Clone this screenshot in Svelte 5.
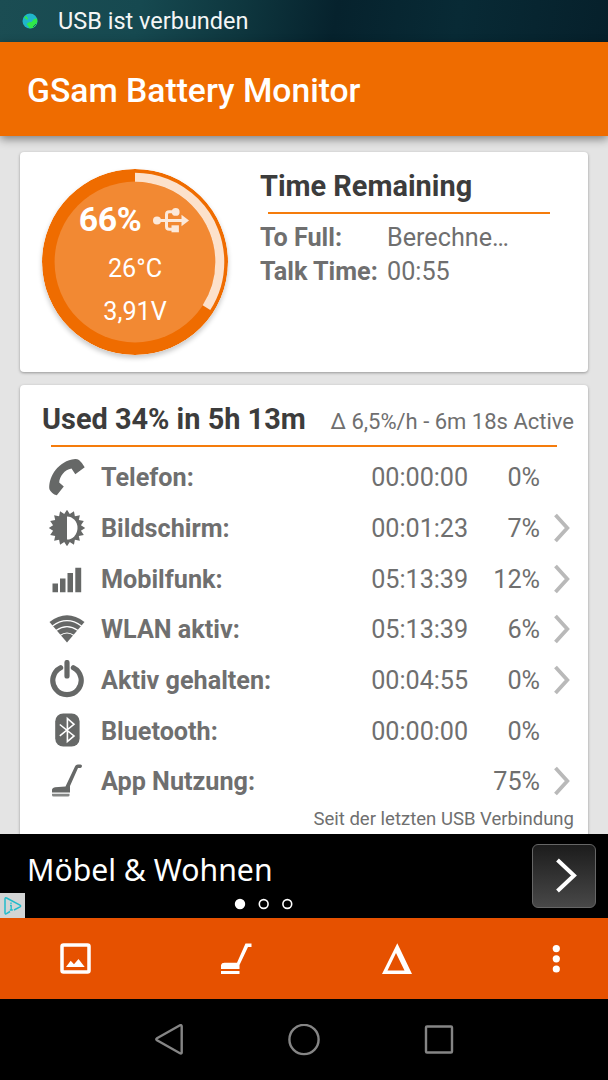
<script lang="ts">
  interface UsageRow {
    icon: string;
    label: string;
    time: string;
    percent: string;
    more: boolean; // shows the chevron
  }

  const level = 66;
  const radius = 84.8;
  const circumference = 2 * Math.PI * radius;
  const usedArc = circumference * (1 - level / 100);

  const rows: UsageRow[] = [
    { icon: 'phone', label: 'Telefon:', time: '00:00:00', percent: '0%', more: false },
    { icon: 'screen', label: 'Bildschirm:', time: '00:01:23', percent: '7%', more: true },
    { icon: 'signal', label: 'Mobilfunk:', time: '05:13:39', percent: '12%', more: true },
    { icon: 'wifi', label: 'WLAN aktiv:', time: '05:13:39', percent: '6%', more: true },
    { icon: 'power', label: 'Aktiv gehalten:', time: '00:04:55', percent: '0%', more: true },
    { icon: 'bluetooth', label: 'Bluetooth:', time: '00:00:00', percent: '0%', more: false },
    { icon: 'vacuum', label: 'App Nutzung:', time: '', percent: '75%', more: true },
  ];

  // 16-pointed star around the brightness icon
  const star = Array.from({ length: 32 }, (_, i) => {
    const r = i % 2 ? 14.2 : 18.2;
    const a = (i * Math.PI) / 16;
    return `${(20 + r * Math.sin(a)).toFixed(2)},${(20 - r * Math.cos(a)).toFixed(2)}`;
  }).join(' ');
</script>

<div class="screen">
  <div class="status-bar">
    <svg class="globe" width="16" height="16" viewBox="0 0 16 16">
      <circle cx="8" cy="8" r="7.5" fill="#20b5cb" />
      <path d="M2 4.5L4 2.8L6.3 6L5 6.8ZM4.5 11L7 9.3L9.5 9L12 6L15.2 5.5Q16 9 13.8 12.5Q11 15.8 7.5 15.3L6.2 13Z" fill="#2fe84a" />
      <path d="M11 14L14 11" stroke="#176f5c" stroke-width="1" />
    </svg>
    <span>USB ist verbunden</span>
  </div>

  <header class="app-bar">
    <h1>GSam Battery Monitor</h1>
  </header>

  <main class="content">
    <section class="card battery">
      <div class="gauge">
        <svg class="gauge-ring" width="186" height="186" viewBox="0 0 186 186">
          <circle cx="93" cy="93" r="93" fill="#ef6c00" />
          <circle cx="93" cy="93" r="80.4" fill="#f28933" />
          <circle
            cx="93"
            cy="93"
            r={radius}
            fill="none"
            stroke="#fce1cb"
            stroke-width="9"
            stroke-dasharray="{usedArc} {circumference}"
            transform="rotate(-90 93 93)"
          />
        </svg>
        <div class="gauge-text">
          <div class="gauge-level">
            <span>{level}%</span>
            <svg width="36" height="25" viewBox="0 0 36 25" fill="#fce9db">
              <circle cx="4" cy="12.5" r="4" />
              <path d="M28.5 6.7L36 12.5L28.5 18.3Z" />
              <circle cx="22.7" cy="3.9" r="3.9" />
              <path d="M18.5 17.3H25.9V24.3H18.5Z" />
              <path d="M4 12.5H30M13.5 12.5V6.5Q13.5 3.7 16.3 3.7H22M13.5 12.5V18.5Q13.5 21.3 16.3 21.3H20" fill="none" stroke="#fce9db" stroke-width="3" />
            </svg>
          </div>
          <div class="gauge-value">26°C</div>
          <div class="gauge-value">3,91V</div>
        </div>
      </div>
      <div class="remaining">
        <h2>Time Remaining</h2>
        <hr />
        <dl>
          <dt>To Full:</dt>
          <dd>Berechne…</dd>
          <dt>Talk Time:</dt>
          <dd>00:55</dd>
        </dl>
      </div>
    </section>

    <section class="card usage">
      <div class="usage-head">
        <h2>Used 34% in 5h 13m</h2>
        <span>Δ 6,5%/h - 6m 18s Active</span>
      </div>
      <hr />
      <ul>
        {#each rows as row (row.label)}
          <li>
            <svg class="row-icon" width="40" height="40" viewBox="0 0 40 40" fill="#666867">
              {#if row.icon === 'phone'}
                <path d="M2.4 32.2C1.2 22 9 6 25 2.5Q29.5 1.4 32 3Q35.5 6 37.7 10.3L28.3 17.2L24.5 11.4C17.5 12.5 12.5 19.5 12.2 25.4L16.8 29.6L9.8 38.3Q4.500 36.8 2.4 32.2Z" />
              {:else if row.icon === 'screen'}
                <polygon points={star} />
                <path d="M20 8.5A10.500 11.500 0 0 1 20 31.500Z" fill="#fff" />
              {:else if row.icon === 'signal'}
                <path d="M5.500 24.500h5.500v8.700h-5.500zM13 19.500h5.500v13.700h-5.500zM20.500 14h5.500v19.200h-5.500zM28.300 8.700h5.900v24.500h-5.900z" />
              {:else if row.icon === 'wifi'}
                <path d="M2.500 13Q20 -.4 37.500 13L20 33.500Z" />
                <path d="M5.500 17Q20 6.300 34.500 17M9 21.500Q20 13.800 31 21.500M13 26.500Q20 21.500 27 26.500" fill="none" stroke="#fff" stroke-width="1.2" />
              {:else if row.icon === 'power'}
                <path d="M13.6 7.700A14.200 14.200 0 1 0 26.400 7.700M20 2.500V16" fill="none" stroke="#666867" stroke-width="5.2" stroke-linecap="round" />
              {:else if row.icon === 'bluetooth'}
                <rect x="8.2" y="2.500" width="24.400" height="33" rx="8" />
                <path d="M12.800 13.500L27 24.900L20.400 30.500V7.500L27 13.300L12.800 24.900" fill="none" stroke="#fff" stroke-width="1.6" />
              {:else}
                <path d="M5 28.500Q5.500 26.500 8 26.200L18.500 25.500L27.500 6.500Q28.500 3.500 31 3.500H33.500Q35 3.500 35 5T33.500 7H31L23 25V31.500H5Z" />
                <path d="M5 32.800H22.500V34.500Q22.500 35.600 21 35.600H6.500Q5 35.600 5 34Z" fill="#858786" />
              {/if}
            </svg>
            <span class="row-label">{row.label}</span>
            <span class="row-time">{row.time}</span>
            <span class="row-percent">{row.percent}</span>
            <span class="row-more">
              {#if row.more}
                <svg width="18" height="30" viewBox="0 0 18 30">
                  <path d="M2.5 2L14.3 15L2.5 28" fill="none" stroke="#b9b9b9" stroke-width="3.8" />
                </svg>
              {/if}
            </span>
          </li>
        {/each}
      </ul>
      <p class="since">Seit der letzten USB Verbindung</p>
    </section>
  </main>

  <aside class="ad">
    <span class="ad-title">Möbel &amp; Wohnen</span>
    <div class="ad-button">
      <svg width="24" height="36" viewBox="0 0 24 36">
        <path d="M2.5 2L19 17.500L2.5 33" fill="none" stroke="#fff" stroke-width="4" />
      </svg>
    </div>
    <svg class="ad-dots" width="60" height="12" viewBox="0 0 60 12" fill="none" stroke="#fff" stroke-width="1.6">
      <circle cx="6" cy="6" r="4.400" fill="#fff" />
      <circle cx="29.700" cy="6" r="4.400" />
      <circle cx="53.300" cy="6" r="4.400" />
    </svg>
    <svg class="ad-choices" width="25" height="25" viewBox="0 0 25 25">
      <rect width="25" height="25" fill="#d3d5d5" />
      <path d="M10 18.500L6.500 20.700Q5 21.500 5 19.800V6Q5 4.200 6.600 5L20 12.200Q21.300 13 20 13.800L14 17" fill="none" stroke="#22bccb" stroke-width="1.5" />
      <path d="M11 9.500V11M10 12.500H11.200V17M9.800 17H12.800" fill="none" stroke="#22bccb" stroke-width="1.3" />
    </svg>
  </aside>

  <div class="toolbar">
    <svg width="32" height="32" viewBox="0 0 32 32">
      <rect x="2" y="2" width="27" height="27" rx="1.5" fill="none" stroke="#fff" stroke-width="3.5" />
      <path d="M6 24L10.700 17.800L14 21.300L18.500 16L24.700 24Z" fill="#fff" />
    </svg>
    <svg width="32" height="32" viewBox="0 0 32 32" fill="#fff">
      <path d="M1 22Q1.500 19.700 4.500 19.700H17L25.500 .5H31.500V4H28L19.500 22V26H1ZM1 28H19.500V31H1Z" />
    </svg>
    <svg width="32" height="32" viewBox="0 0 32 32">
      <path d="M17.300 .3L32 31H2ZM16 10L7.500 27.500H24.500Z" fill="#fff" fill-rule="evenodd" />
    </svg>
    <svg width="32" height="32" viewBox="0 0 32 32" fill="#fff">
      <circle cx="16.300" cy="5.600" r="3.600" />
      <circle cx="16.300" cy="15.800" r="3.600" />
      <circle cx="16.300" cy="26" r="3.600" />
    </svg>
  </div>

  <nav class="nav-bar">
    <svg width="32" height="32" viewBox="0 0 32 32">
      <path d="M28.700 2.500V28.500Q28.500 30 27 29.200L4 16.300Q2.500 15.200 4 14.200L27 1.300Q28.500 .6 28.700 2.500Z" />
    </svg>
    <svg width="32" height="32" viewBox="0 0 32 32">
      <circle cx="16" cy="15.500" r="14.600" />
    </svg>
    <svg width="32" height="32" viewBox="0 0 32 32">
      <rect x="3" y="2.500" width="26" height="26" rx="1" />
    </svg>
  </nav>
</div>

<style>
  :global(body) {
    margin: 0;
  }

  .screen {
    display: flex;
    flex-direction: column;
    width: 608px;
    height: 1080px;
    overflow: hidden;
    background: #e4e4e4;
    color: #6f6f6f;
    font-family: Roboto, 'Liberation Sans', sans-serif;
    font-size: 25.2px;
    line-height: 30px;
  }
  .screen svg {
    display: block;
    flex: none;
  }
  h1,
  h2,
  p,
  ul,
  dl,
  dd {
    margin: 0;
    padding: 0;
  }
  hr {
    height: 2px;
    margin: 0;
    border: 0;
    background: #f57c0c;
  }

  .status-bar {
    display: flex;
    align-items: center;
    gap: 20px;
    flex: none;
    height: 42px;
    padding-left: 22px;
    box-sizing: border-box;
    background: linear-gradient(100deg, #1b4d53 0%, #164950 23%, #0e363e 40%, #06222d 55%, #082a35 75%, #06202b 100%);
    color: #f4f6f6;
    font-size: 23.5px;
  }

  .app-bar {
    position: relative;
    flex: none;
    display: flex;
    align-items: center;
    height: 94px;
    padding: 0 27px;
    background: #ef6c00;
    box-shadow: 0 3px 9px rgba(0, 0, 0, 0.45);
    z-index: 1;
  }
  .app-bar h1 {
    padding-top: 4px;
    color: #fff;
    font-size: 33.65px;
    font-weight: 500;
    line-height: 40px;
  }

  .content {
    display: flex;
    flex-direction: column;
    gap: 13px;
    flex: none;
    height: 698px;
    padding: 16px 20px 0;
    box-sizing: border-box;
    overflow: hidden;
  }
  .card {
    flex: none;
    box-sizing: border-box;
    background: #fff;
    border-radius: 4px;
    box-shadow: 0 1px 3px rgba(0, 0, 0, 0.35);
  }
  .card h2 {
    color: #3c3c3c;
    font-size: 28.9px;
    font-weight: 700;
    line-height: 34px;
    white-space: nowrap;
  }

  .battery {
    display: flex;
    gap: 32px;
    height: 220px;
    padding: 17px 22px 0;
  }
  .gauge {
    display: grid;
    width: 186px;
    height: 186px;
  }
  .gauge-ring,
  .gauge-text {
    grid-area: 1 / 1;
  }
  .gauge-ring {
    border-radius: 50%;
    box-shadow: 0 3px 5px rgba(0, 0, 0, 0.22);
  }
  .gauge-text {
    z-index: 1;
    padding-top: 30px;
    color: #fff;
    text-align: center;
  }
  .gauge-level {
    display: flex;
    align-items: center;
    justify-content: center;
    gap: 12px;
    height: 42px;
    padding-right: 2px;
    font-size: 33.8px;
    font-weight: 700;
    letter-spacing: -0.5px;
  }
  .gauge-value {
    padding-top: 13px;
  }

  .remaining {
    width: 298px;
  }
  .remaining hr {
    margin: 9px 8px;
  }
  .remaining dl {
    display: grid;
    grid-template-columns: 127px 1fr;
    row-gap: 4px;
  }
  .remaining dt {
    font-weight: 700;
    white-space: nowrap;
  }

  .usage {
    height: 480px;
    padding: 17px 14px 0 22px;
  }
  .usage-head {
    display: flex;
    align-items: baseline;
    justify-content: space-between;
  }
  .usage-head span {
    font-size: 22px;
    white-space: nowrap;
  }
  .usage > hr {
    margin: 8px 17px 6px 9px;
  }
  .usage ul {
    list-style: none;
  }
  .usage li {
    display: flex;
    align-items: center;
    height: 50.67px;
  }
  .row-icon {
    margin: 0 14px 2px 5px;
  }
  .row-label {
    flex: 1;
    font-weight: 700;
  }
  .row-time {
    letter-spacing: -0.05px;
  }
  .row-percent {
    width: 72px;
    text-align: right;
  }
  .row-more {
    width: 34px;
    padding: 0 0 2px 13px;
    box-sizing: border-box;
  }
  .since {
    font-size: 18.55px;
    line-height: 23px;
    text-align: right;
  }

  .ad {
    position: relative;
    display: flex;
    align-items: center;
    justify-content: space-between;
    flex: none;
    height: 84px;
    padding: 0 12px 0 27px;
    background: #000;
  }
  .ad-title {
    padding-bottom: 13px;
    color: #fff;
    font-family: 'Noto Sans', 'Open Sans', sans-serif;
    font-size: 30.2px;
    line-height: 40px;
  }
  .ad-button {
    display: flex;
    align-items: center;
    justify-content: center;
    width: 64px;
    height: 64px;
    padding-left: 6px;
    box-sizing: border-box;
    border: 1.5px solid #666;
    border-radius: 6px;
    background: linear-gradient(#1c1c1c, #484848);
  }
  .ad-dots {
    position: absolute;
    left: 234px;
    bottom: 8px;
  }
  .ad-choices {
    position: absolute;
    left: 0;
    bottom: 0;
  }

  .toolbar {
    display: flex;
    align-items: center;
    justify-content: space-between;
    flex: none;
    height: 81px;
    padding: 0 36px 0 60px;
    background: #e65100;
  }

  .nav-bar {
    display: flex;
    align-items: center;
    justify-content: center;
    gap: 103px;
    flex: none;
    height: 81px;
    background: #000;
  }
  .nav-bar svg {
    fill: none;
    stroke: #858585;
    stroke-width: 2.4;
  }
</style>
